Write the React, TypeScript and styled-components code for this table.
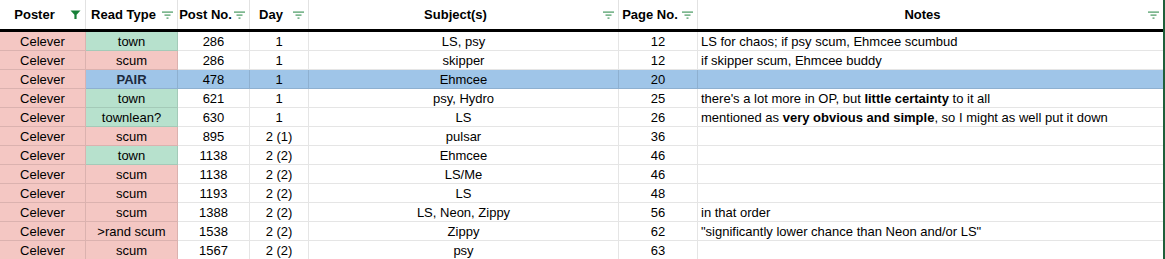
import React from "react";
import styled, { createGlobalStyle, css } from "styled-components";

const Global = createGlobalStyle`
  html, body { margin: 0; padding: 0; background: #fff; }
  body { font-family: "Liberation Sans", Arial, sans-serif; }
`;

const COLS = "86px 92px 72px 59px 310px 79px 465px";

const Sheet = styled.div`
  width: 1163px;
  border-right: 2px solid #1f5f3a;
  font-family: "Liberation Sans", Arial, sans-serif;
  font-size: 13px;
  color: #000;
`;

const HeaderRow = styled.div`
  display: grid;
  grid-template-columns: ${COLS};
  height: 32px;
  box-sizing: border-box;
  border-bottom: 3px solid #000;
`;

const HeaderCell = styled.div`
  display: flex;
  align-items: center;
  box-sizing: border-box;
  border-right: 1px solid #e2e2e2;
  font-weight: bold;
  padding-right: 3px;
  &:last-child { border-right: none; }
`;

const HeaderLabel = styled.span`
  flex: 1;
  text-align: center;
  white-space: nowrap;
`;

const IconSlot = styled.span`
  width: 13px;
  height: 14px;
  display: flex;
  align-items: center;
  justify-content: center;
  flex: none;
`;

const Row = styled.div`
  display: grid;
  grid-template-columns: ${COLS};
  height: 19px;
`;

type Tone = "pink" | "green" | "blue" | "none";

const toneBg: Record<Tone, string> = {
  pink: "#f4c7c3",
  green: "#b7e1cd",
  blue: "#9fc5e8",
  none: "transparent",
};

const Cell = styled.div<{ $tone: Tone; $align: "center" | "left"; $bold?: boolean }>`
  box-sizing: border-box;
  height: 19px;
  line-height: 19px;
  border-right: 1px solid rgba(0, 0, 0, 0.1);
  border-bottom: 1px solid rgba(0, 0, 0, 0.1);
  background: ${(p) => toneBg[p.$tone]};
  text-align: ${(p) => p.$align};
  padding: 0 3px;
  white-space: nowrap;
  overflow: hidden;
  ${(p) => p.$bold && css`font-weight: bold; color: #1c2a3e;`}
  &:last-child { border-right: none; }
`;

const FilterLines = () => (
  <svg width="11" height="10" viewBox="0 0 11 10">
    <rect x="0" y="1.5" width="11" height="1.2" fill="#188038" opacity="0.8" />
    <rect x="2.5" y="4.5" width="6" height="1.2" fill="#188038" opacity="0.8" />
    <rect x="4.5" y="7.5" width="2" height="1.2" fill="#188038" opacity="0.8" />
  </svg>
);

const FunnelIcon = () => (
  <svg width="11" height="11" viewBox="0 0 11 11">
    <path d="M0.5 1.5 H10.5 L6.6 5.8 V10 H4.4 V5.8 Z" fill="#188038" />
  </svg>
);

const headers = [
  { label: "Poster", active: true },
  { label: "Read Type" },
  { label: "Post No." },
  { label: "Day" },
  { label: "Subject(s)" },
  { label: "Page No." },
  { label: "Notes" },
];

type Data = {
  read: string;
  readTone: Tone;
  post: string;
  day: string;
  subj: string;
  page: string;
  notes?: React.ReactNode;
  highlight?: boolean;
};

const rows: Data[] = [
  { read: "town", readTone: "green", post: "286", day: "1", subj: "LS, psy", page: "12", notes: "LS for chaos; if psy scum, Ehmcee scumbud" },
  { read: "scum", readTone: "pink", post: "286", day: "1", subj: "skipper", page: "12", notes: "if skipper scum, Ehmcee buddy" },
  { read: "PAIR", readTone: "blue", post: "478", day: "1", subj: "Ehmcee", page: "20", highlight: true },
  { read: "town", readTone: "green", post: "621", day: "1", subj: "psy, Hydro", page: "25", notes: <>there's a lot more in OP, but <b>little certainty</b> to it all</> },
  { read: "townlean?", readTone: "green", post: "630", day: "1", subj: "LS", page: "26", notes: <>mentioned as <b>very obvious and simple</b>, so I might as well put it down</> },
  { read: "scum", readTone: "pink", post: "895", day: "2 (1)", subj: "pulsar", page: "36" },
  { read: "town", readTone: "green", post: "1138", day: "2 (2)", subj: "Ehmcee", page: "46" },
  { read: "scum", readTone: "pink", post: "1138", day: "2 (2)", subj: "LS/Me", page: "46" },
  { read: "scum", readTone: "pink", post: "1193", day: "2 (2)", subj: "LS", page: "48" },
  { read: "scum", readTone: "pink", post: "1388", day: "2 (2)", subj: "LS, Neon, Zippy", page: "56", notes: "in that order" },
  { read: ">rand scum", readTone: "pink", post: "1538", day: "2 (2)", subj: "Zippy", page: "62", notes: "\"significantly lower chance than Neon and/or LS\"" },
  { read: "scum", readTone: "pink", post: "1567", day: "2 (2)", subj: "psy", page: "63" },
];

export default function App() {
  return (
    <>
      <Global />
      <Sheet>
        <HeaderRow>
          {headers.map((h) => (
            <HeaderCell key={h.label}>
              <HeaderLabel>{h.label}</HeaderLabel>
              <IconSlot>{h.active ? <FunnelIcon /> : <FilterLines />}</IconSlot>
            </HeaderCell>
          ))}
        </HeaderRow>
        {rows.map((r, i) => {
          const base: Tone = r.highlight ? "blue" : "none";
          return (
            <Row key={i}>
              <Cell $tone="pink" $align="center">Celever</Cell>
              <Cell $tone={r.readTone} $align="center" $bold={r.highlight}>{r.read}</Cell>
              <Cell $tone={base} $align="center">{r.post}</Cell>
              <Cell $tone={base} $align="center">{r.day}</Cell>
              <Cell $tone={base} $align="center">{r.subj}</Cell>
              <Cell $tone={base} $align="center">{r.page}</Cell>
              <Cell $tone={base} $align="left">{r.notes}</Cell>
            </Row>
          );
        })}
      </Sheet>
    </>
  );
}
